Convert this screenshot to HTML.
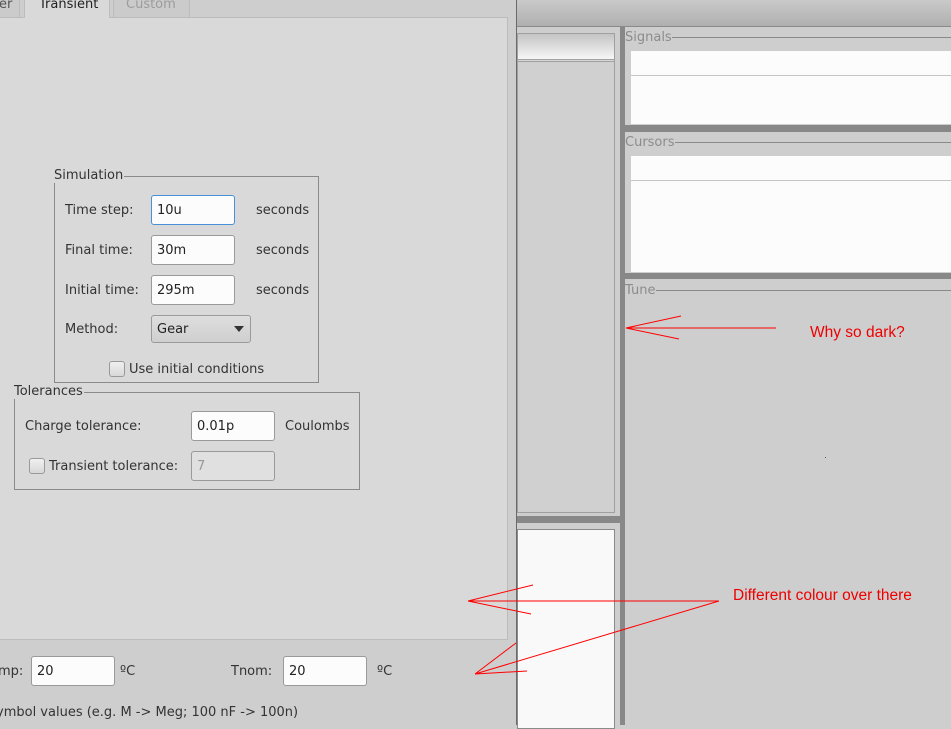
<!DOCTYPE html>
<html><head><style>
*{margin:0;padding:0;box-sizing:border-box}
body{width:951px;height:725px;overflow:hidden;background:#cecece;font-family:"DejaVu Sans","Liberation Sans",sans-serif;font-size:13px;color:#333;position:relative}
.a{position:absolute}
.t{position:absolute;white-space:nowrap;line-height:16px;margin-top:2px}
.in{position:absolute;background:#fcfcfc;border:1px solid #9a9a9a;border-radius:3px;padding-left:5px;padding-top:2px;line-height:26px;height:30px;color:#222}
.cb{position:absolute;width:16px;height:16px;border:1px solid #999;border-radius:3px;background:linear-gradient(#f0f0f0,#d8d8d8);margin-top:1px}
.gb{position:absolute;border:1px solid #8a8a8a}
.gl{position:absolute;background:#d9d9d9;padding-right:1px;line-height:14px;top:-8px;left:-1px}
.rl{position:absolute;color:#8c8c8c;line-height:14px;background:#cecece;margin-top:1px}
.red{position:absolute;color:#e00;font-family:"Liberation Sans",sans-serif;font-size:15.5px;white-space:nowrap}
</style></head><body>
<div class="a" style="left:516px;top:0;width:435px;height:27px;background:linear-gradient(#cacaca,#b0b0b0);border-bottom:1px solid #8a8a8a"></div>
<div class="a" style="left:517px;top:33px;width:98px;height:480px;border:1px solid #a0a0a0;background:#d0d0d0"></div>
<div class="a" style="left:518px;top:34px;width:96px;height:25px;background:linear-gradient(#c4c4c4,#f6f6f6)"></div>
<div class="a" style="left:518px;top:59px;width:96px;height:3px;border-top:1px solid #a0a0a0;border-bottom:1px solid #a0a0a0;background:#d8d8d8"></div>
<div class="a" style="left:516px;top:516px;width:108px;height:7px;background:#888"></div>
<div class="a" style="left:517px;top:529px;width:98px;height:200px;border:1px solid #8a8a8a;background:#f9f9f9"></div>
<div class="a" style="left:620px;top:27px;width:5px;height:698px;background:#888"></div>
<div class="a" style="left:625px;top:27px;width:326px;height:98px;background:#cecece"></div>
<div class="a" style="left:625px;top:37px;width:326px;height:1px;background:#8a8a8a"></div>
<div class="rl" style="left:625px;top:30px">Signals</div>
<div class="a" style="left:631px;top:51px;width:320px;height:73px;background:#fcfcfc"></div>
<div class="a" style="left:631px;top:75px;width:320px;height:1px;background:#c4c4c4"></div>
<div class="a" style="left:625px;top:125px;width:326px;height:7px;background:#888"></div>
<div class="rl" style="left:625px;top:135px;padding-right:2px">Cursors</div>
<div class="a" style="left:675px;top:142px;width:276px;height:1px;background:#8a8a8a"></div>
<div class="a" style="left:631px;top:156px;width:320px;height:116px;background:#fcfcfc"></div>
<div class="a" style="left:631px;top:180px;width:320px;height:1px;background:#c4c4c4"></div>
<div class="a" style="left:625px;top:273px;width:326px;height:6px;background:#888"></div>
<div class="rl" style="left:625px;top:283px">Tune</div>
<div class="a" style="left:656px;top:290px;width:295px;height:1px;background:#8a8a8a"></div>
<div class="a" style="left:0;top:0;width:517px;height:725px;background:#cecece;border-right:1px solid #6a6a6a"></div>
<div class="a" style="left:0;top:17px;width:508px;height:623px;background:#d9d9d9;border:1px solid #bcbcbc;border-left:0"></div>
<div class="a" style="left:0;top:0;width:20px;height:17px;background:#cbcbcb;border-right:1px solid #bcbcbc"></div>
<div class="t" style="left:-1px;top:-5px;color:#555">er</div>
<div class="a" style="left:24px;top:-2px;width:86px;height:20px;background:#d9d9d9;border:1px solid #bcbcbc;border-bottom:0"></div>
<div class="t" style="left:39px;top:-5px;color:#222">Transient</div>
<div class="a" style="left:113px;top:0;width:77px;height:17px;background:#cbcbcb;border:1px solid #bcbcbc;border-top:0;border-bottom:0"></div>
<div class="t" style="left:126px;top:-5px;color:#9c9c9c">Custom</div>

<div class="gb" style="left:54px;top:176px;width:265px;height:207px"><div class="gl">Simulation</div></div>
<div class="t" style="left:65px;top:201px">Time step:</div>
<div class="in" style="left:151px;top:195px;width:84px;border-color:#4a90d9">10u</div>
<div class="t" style="left:256px;top:201px">seconds</div>
<div class="t" style="left:65px;top:241px">Final time:</div>
<div class="in" style="left:151px;top:235px;width:84px">30m</div>
<div class="t" style="left:256px;top:241px">seconds</div>
<div class="t" style="left:65px;top:281px">Initial time:</div>
<div class="in" style="left:151px;top:275px;width:84px">295m</div>
<div class="t" style="left:256px;top:281px">seconds</div>
<div class="t" style="left:65px;top:320px">Method:</div>
<div class="in" style="left:151px;top:315px;width:100px;height:28px;line-height:24px;background:linear-gradient(#dedede,#cfcfcf)">Gear</div>
<div class="a" style="left:234px;top:326px;width:0;height:0;border-left:5px solid transparent;border-right:5px solid transparent;border-top:6px solid #333"></div>
<div class="cb" style="left:109px;top:360px"></div>
<div class="t" style="left:129px;top:360px">Use initial conditions</div>

<div class="gb" style="left:14px;top:392px;width:346px;height:98px"><div class="gl">Tolerances</div></div>
<div class="t" style="left:25px;top:417px">Charge tolerance:</div>
<div class="in" style="left:191px;top:411px;width:84px">0.01p</div>
<div class="t" style="left:285px;top:417px">Coulombs</div>
<div class="cb" style="left:29px;top:457px"></div>
<div class="t" style="left:49px;top:457px">Transient tolerance:</div>
<div class="in" style="left:191px;top:451px;width:84px;background:#e0e0e0;color:#999">7</div>

<div class="t" style="left:-2px;top:662px">mp:</div>
<div class="in" style="left:31px;top:656px;width:84px">20</div>
<div class="t" style="left:120px;top:662px">ºC</div>
<div class="t" style="left:231px;top:662px">Tnom:</div>
<div class="in" style="left:283px;top:656px;width:84px">20</div>
<div class="t" style="left:377px;top:662px">ºC</div>
<div class="t" style="left:-4px;top:703px">ymbol values (e.g. M -&gt; Meg; 100 nF -&gt; 100n)</div>

<svg class="a" style="left:0;top:0" width="951" height="725">
<g stroke="#f00" stroke-width="1" fill="none">
<path d="M626 328L776 328M626 328L681 316M626 328L679 339"/>
<path d="M468 601L719 601M468 601L533 585M468 601L531 614"/>
<path d="M475 674L719 601M475 674L516 643M475 674L527 671"/>
</g></svg>
<div class="red" style="left:810px;top:324px">Why so dark?</div>
<div class="red" style="left:733px;top:587px">Different colour over there</div>
<div class="a" style="left:825px;top:457px;width:1px;height:1px;background:#555"></div>
</body></html>
